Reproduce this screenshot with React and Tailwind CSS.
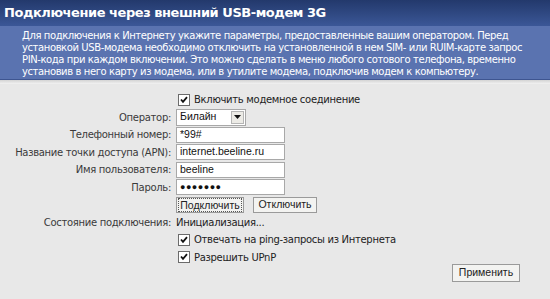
import React from "react";

const font = { fontFamily: '"DejaVu Sans", Verdana, sans-serif' };

function Check() {
  return (
    <span className="inline-flex h-[12px] w-[12px] items-center justify-center border border-[#6b6b6b] bg-white shrink-0">
      <svg width="8" height="8" viewBox="0 0 8 8">
        <path d="M1 3.5 L3 5.8 L7 1.2" stroke="#111" strokeWidth="1.8" fill="none" />
      </svg>
    </span>
  );
}

function Row({ label, children }) {
  return (
    <div className="flex h-[17.5px] items-center">
      <div className="w-[172px] shrink-0 whitespace-nowrap pr-[1px] text-right text-[10px] tracking-[-0.3px] text-[#3a3a3a]">{label}</div>
      <div className="flex items-center pl-[4px]">{children}</div>
    </div>
  );
}

function Input({ value }) {
  return (
    <div
      className="flex h-[16px] w-[109px] items-center border border-[#a8a8a8] bg-white pl-[3px] text-[10.5px] text-[#111]"
      style={{ fontFamily: '"Liberation Sans", Arial, sans-serif' }}
    >
      {value}
    </div>
  );
}

function Btn({ children, w, focus }) {
  return (
    <div
      className={`flex h-[16px] items-center justify-center border border-[#9a9a9a] bg-[#f3f3f1] text-[10.5px] text-[#222] ${w}`}
      style={{ fontFamily: '"Liberation Sans", Arial, sans-serif' }}
    >
      <span className={focus ? "border border-dotted border-[#555] px-[1px] leading-[12px]" : ""}>{children}</span>
    </div>
  );
}

function CheckLine({ children }) {
  return (
    <div className="flex items-center gap-[4px] pl-[2px] whitespace-nowrap text-[10px] tracking-[-0.3px] text-[#222]">
      <Check />
      <span>{children}</span>
    </div>
  );
}

export default function App() {
  return (
    <div className="h-[299px] w-[550px] overflow-hidden bg-[#e8e8e8]" style={font}>
      <div className="flex h-[26px] items-center bg-gradient-to-b from-[#23396c] to-[#3b5797] pl-[4px] text-[13px] font-bold tracking-[-0.45px] text-white">
        Подключение через внешний USB-модем 3G
      </div>
      <div className="h-[54px] whitespace-nowrap border-b border-[#3e5590] bg-[#5a73b0] pl-[22px] pt-[4px] text-[10px] leading-[12px] tracking-[-0.4px] text-white">
        <div>Для подключения к Интернету укажите параметры, предоставленные вашим оператором. Перед</div>
        <div>установкой USB-модема необходимо отключить на установленной в нем SIM- или RUIM-карте запрос</div>
        <div>PIN-кода при каждом включении. Это можно сделать в меню любого сотового телефона, временно</div>
        <div>установив в него карту из модема, или в утилите модема, подключив модем к компьютеру.</div>
      </div>
      <div className="h-[4px] bg-gradient-to-b from-[#d4d4d4] to-[#f2f2f2]" />
      <div className="pt-[7px]">
        <Row label="">
          <CheckLine>Включить модемное соединение</CheckLine>
        </Row>
        <Row label="Оператор:">
          <div
            className="flex h-[17px] w-[70px] items-center justify-between border border-[#a8a8a8] bg-white pl-[3px] text-[10.5px] text-[#111]"
            style={{ fontFamily: '"Liberation Sans", Arial, sans-serif' }}
          >
            <span>Билайн</span>
            <span className="mr-[1px] flex h-[13px] w-[13px] items-center justify-center border border-[#b5b5b5] bg-[#ecebe6]">
              <svg width="7" height="4" viewBox="0 0 7 4">
                <path d="M0 0 L7 0 L3.5 4 Z" fill="#111" />
              </svg>
            </span>
          </div>
        </Row>
        <Row label="Телефонный номер:">
          <Input value="*99#" />
        </Row>
        <Row label="Название точки доступа (APN):">
          <Input value="internet.beeline.ru" />
        </Row>
        <Row label="Имя пользователя:">
          <Input value="beeline" />
        </Row>
        <Row label="Пароль:">
          <Input value={<span className="tracking-[0.5px] text-[9px]">●●●●●●●</span>} />
        </Row>
        <Row label="">
          <div className="flex items-center gap-[9px]">
            <Btn w="w-[68px]" focus>Подключить</Btn>
            <Btn w="w-[64px]">Отключить</Btn>
          </div>
        </Row>
        <Row label="Состояние подключения:">
          <span className="whitespace-nowrap text-[10px] tracking-[-0.3px] text-[#222]">Инициализация...</span>
        </Row>
        <Row label="">
          <CheckLine>Отвечать на ping-запросы из Интернета</CheckLine>
        </Row>
        <Row label="">
          <CheckLine>Разрешить UPnP</CheckLine>
        </Row>
      </div>
      <div className="-mt-[2px] flex justify-end pr-[30px]">
        <div
          className="flex h-[18px] w-[68px] items-center justify-center border border-[#9a9a9a] bg-[#f3f3f1] text-[10.5px] text-[#222]"
          style={{ fontFamily: '"Liberation Sans", Arial, sans-serif' }}
        >
          Применить
        </div>
      </div>
    </div>
  );
}
